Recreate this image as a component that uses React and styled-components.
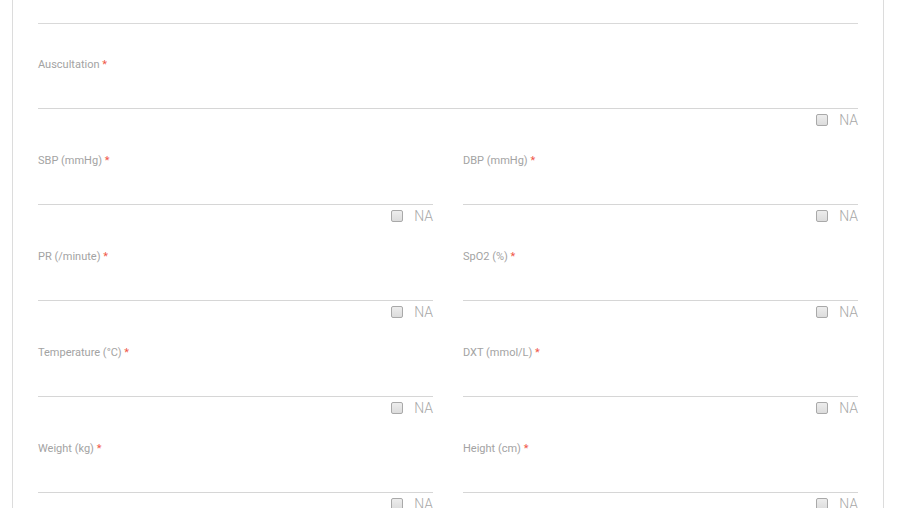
import React from "react";
import styled, { createGlobalStyle } from "styled-components";

const GlobalStyle = createGlobalStyle`
  html, body {
    margin: 0;
    padding: 0;
    background: #fff;
    overflow: hidden;
    font-family: Roboto, "Liberation Sans", Arial, sans-serif;
  }
`;

const rows = [
  [{ label: "SBP (mmHg)" }, { label: "DBP (mmHg)" }],
  [{ label: "PR (/minute)" }, { label: "SpO2 (%)" }],
  [{ label: "Temperature (°C)" }, { label: "DXT (mmol/L)" }],
  [{ label: "Weight (kg)" }, { label: "Height (cm)" }],
];

function Field({ label }) {
  return (
    <FieldBox>
      <Label>
        {label} <Req>*</Req>
      </Label>
      <Input />
      <NaRow>
        <Check type="checkbox" />
        <NaText>NA</NaText>
      </NaRow>
    </FieldBox>
  );
}

export default function App() {
  return (
    <Page>
      <GlobalStyle />
      <Card>
        <PrevLine />
        <Field label="Auscultation" />
        {rows.map((r, i) => (
          <Row key={i}>
            {r.map((f) => (
              <Field key={f.label} label={f.label} />
            ))}
          </Row>
        ))}
      </Card>
    </Page>
  );
}

const Page = styled.div`
  height: 508px;
  padding-left: 12px;
`;

const Card = styled.div`
  width: 820px;
  min-height: 600px;
  padding: 0 25px;
  border-left: 1px solid #dcdcdc;
  border-right: 1px solid #dcdcdc;
`;

const PrevLine = styled.div`
  height: 23px;
  border-bottom: 1px solid #d9d9d9;
  margin-bottom: 33px;
`;

const Row = styled.div`
  display: grid;
  grid-template-columns: 1fr 1fr;
  column-gap: 30px;
`;

const FieldBox = styled.div`
  display: flex;
  flex-direction: column;
  margin-bottom: 22px;
`;

const Label = styled.div`
  height: 16px;
  line-height: 16px;
  font-size: 11px;
  color: #a3a3a3;
`;

const Req = styled.span`
  color: #f0584a;
`;

const Input = styled.div`
  height: 35px;
  border-bottom: 1px solid #d6d6d6;
`;

const NaRow = styled.div`
  height: 22px;
  display: flex;
  align-items: center;
  justify-content: flex-end;
  gap: 11px;
`;

const Check = styled.input`
  appearance: none;
  margin: 0;
  width: 12px;
  height: 12px;
  box-sizing: border-box;
  border: 1px solid #a9a9a9;
  border-radius: 2px;
  background: linear-gradient(#ededed, #dcdcdc);
`;

const NaText = styled.span`
  font-size: 14px;
  font-weight: 300;
  color: #a8a8a8;
  line-height: 22px;
`;
